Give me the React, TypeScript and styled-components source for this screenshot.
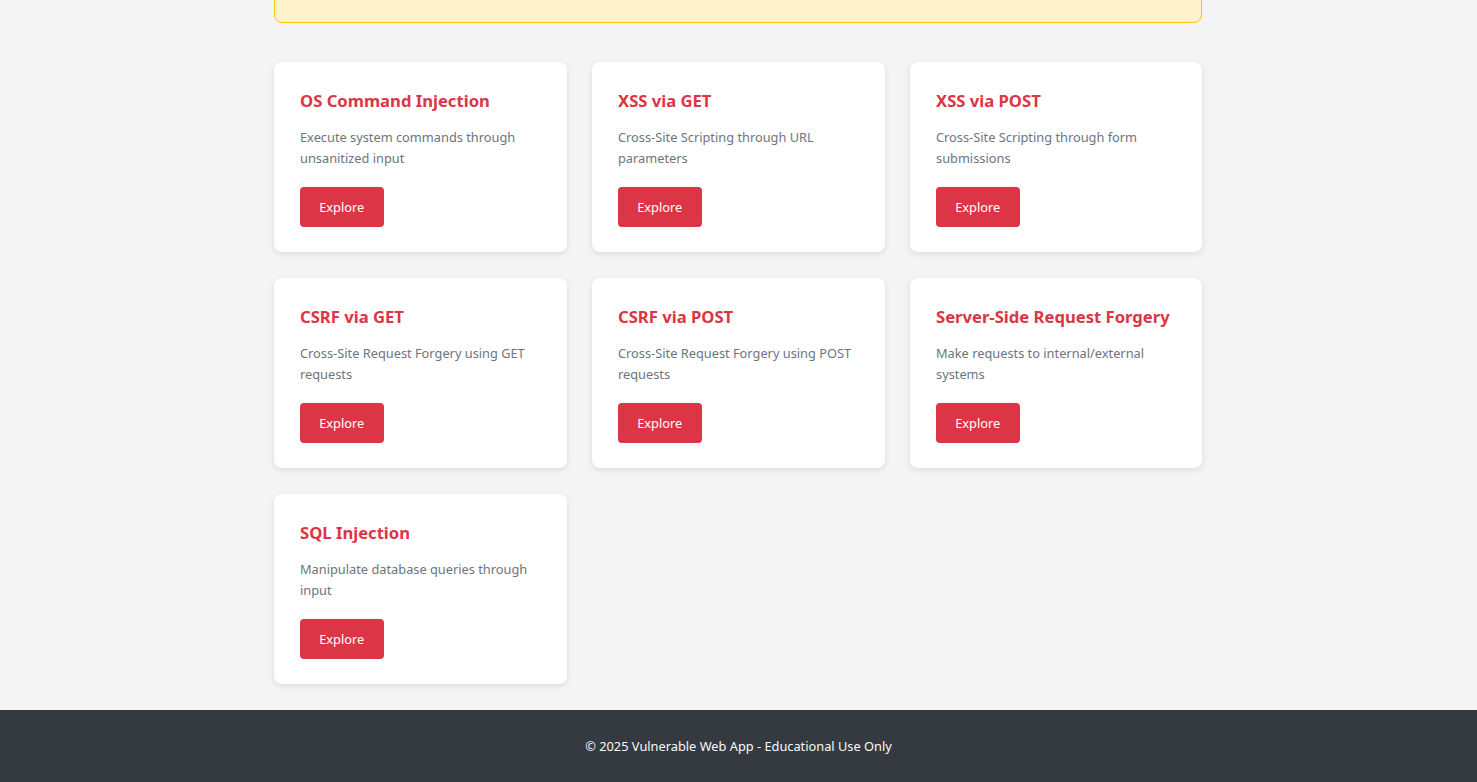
import React from "react";
import styled, { createGlobalStyle } from "styled-components";

const Global = createGlobalStyle`
  html, body { margin: 0; padding: 0; }
  body {
    background: #f4f4f4;
    font-family: "Noto Sans", "Open Sans", sans-serif;
    color: #333;
  }
  * { box-sizing: border-box; }
`;

const Page = styled.div`
  min-height: 100vh;
  display: flex;
  flex-direction: column;
`;

const Main = styled.main`
  width: 928px;
  margin-left: calc(50% - 464.5px);
  padding-bottom: 26px;
`;

const Alert = styled.div`
  margin-top: -40px;
  height: 63px;
  background: #fff3cd;
  border: 1px solid #ffc107;
  border-radius: 8px;
`;

const Grid = styled.div`
  margin-top: 39px;
  display: grid;
  grid-template-columns: 293px 293px 292px;
  column-gap: 25px;
  row-gap: 26px;
`;

const Card = styled.div`
  background: #fff;
  border-radius: 8px;
  box-shadow: 0 2px 6px rgba(0, 0, 0, 0.1);
  padding: 26px 26px 0;
  height: 190px;
`;

const Title = styled.h3`
  margin: 0 0 14px;
  font-size: 16.64px;
  line-height: 25px;
  font-weight: 700;
  color: #dc3545;
`;

const Desc = styled.p`
  margin: 0 0 18px;
  font-size: 12.8px;
  line-height: 21px;
  color: #6c757d;
`;

const Button = styled.a`
  display: inline-flex;
  align-items: center;
  justify-content: center;
  height: 40px;
  width: 83.5px;
  background: #dc3545;
  color: #fff;
  font-size: 12.8px;
  border-radius: 4px;
  text-decoration: none;
`;

const Footer = styled.footer`
  margin-top: auto;
  background: #343a40;
  color: #f8f9fa;
  height: 72px;
  display: flex;
  align-items: center;
  justify-content: center;
  font-size: 12.8px;
`;

const items = [
  ["OS Command Injection", "Execute system commands through unsanitized input"],
  ["XSS via GET", "Cross-Site Scripting through URL parameters"],
  ["XSS via POST", "Cross-Site Scripting through form submissions"],
  ["CSRF via GET", "Cross-Site Request Forgery using GET requests"],
  ["CSRF via POST", "Cross-Site Request Forgery using POST requests"],
  ["Server-Side Request Forgery", "Make requests to internal/external systems"],
  ["SQL Injection", "Manipulate database queries through input"],
];

export default function App() {
  return (
    <Page>
      <Global />
      <Main>
        <Alert />
        <Grid>
          {items.map(([t, d]) => (
            <Card key={t}>
              <Title>{t}</Title>
              <Desc>{d}</Desc>
              <Button href="#">Explore</Button>
            </Card>
          ))}
        </Grid>
      </Main>
      <Footer>© 2025 Vulnerable Web App - Educational Use Only</Footer>
    </Page>
  );
}
